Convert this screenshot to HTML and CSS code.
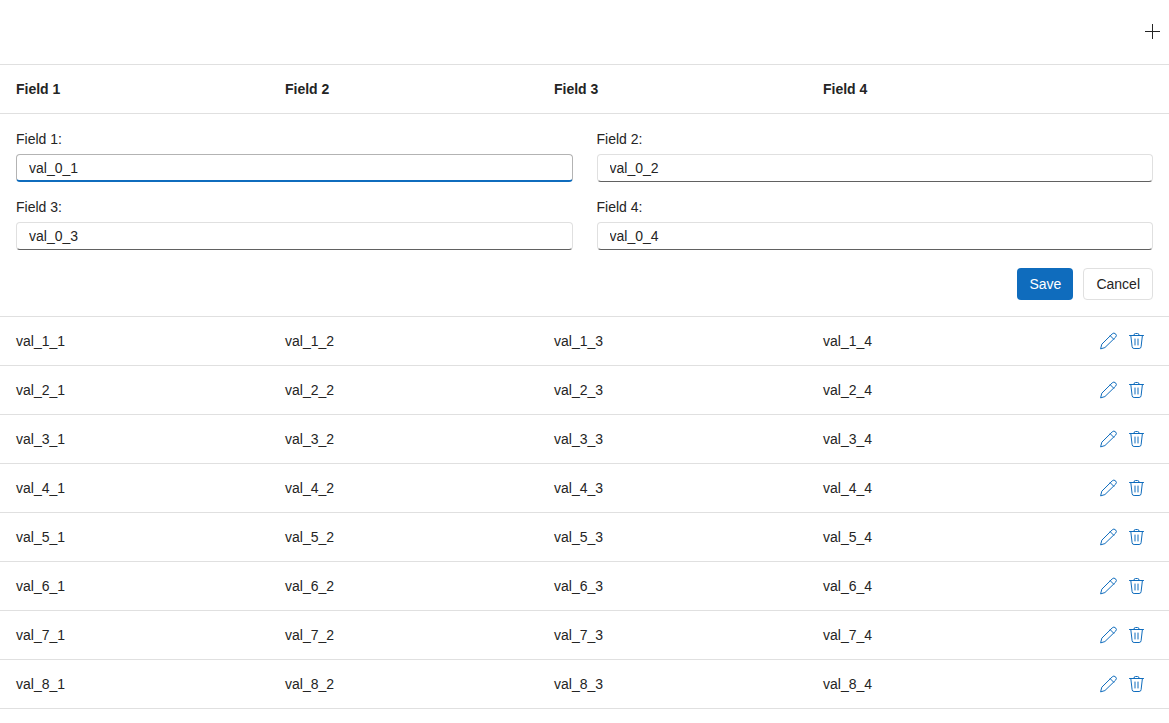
FILE: index.html
```html
<!DOCTYPE html>
<html lang="en">
<head>
<meta charset="utf-8">
<title>Editable grid</title>
<link rel="stylesheet" href="styles.css">
</head>
<body>
<svg class="sprite" aria-hidden="true">
  <symbol id="edit" viewBox="0 0 20 20"><path fill="none" stroke="currentColor" stroke-linejoin="round" stroke-linecap="round" d="M1.700 17.500 2.800 13.200 13.200 2.900A2.300 2.300 0 0 1 16.600 6.200L6.200 16.300ZM11.300 4.800l3.400 3.400"/></symbol>
  <symbol id="trash" viewBox="0 0 20 20"><path fill="none" stroke="currentColor" stroke-linecap="round" d="M2.500 4.500h14M7 4.500V4A1.500 1.500 0 0 1 8.500 2.500h2A1.500 1.500 0 0 1 12 4v.5M3.800 4.500l1.300 11.200A2 2 0 0 0 7.100 17.500h5A2 2 0 0 0 14.100 15.700L15.400 4.500M8 8v6M11 8v6"/></symbol>
</svg>
<header class="toolbar">
  <button class="icon-button add" type="button" aria-label="Add a row">
    <svg class="add-icon" viewBox="0 0 16 16"><path fill="none" stroke="currentColor" d="M7.500 0v15M0 7.500h15"/></svg>
  </button>
</header>
<table class="grid">
  <colgroup><col><col><col><col><col class="command-col"></colgroup>
  <thead>
    <tr><th scope="col">Field 1</th><th scope="col">Field 2</th><th scope="col">Field 3</th><th scope="col">Field 4</th><td></td></tr>
  </thead>
  <tbody id="rows">
    <tr>
      <td class="edit-cell" colspan="5">
        <form class="edit-form">
          <div class="fields">
            <div class="field"><label for="f1">Field 1:</label><input class="focused" id="f1" type="text" value="val_0_1"></div>
            <div class="field"><label for="f2">Field 2:</label><input id="f2" type="text" value="val_0_2"></div>
            <div class="field"><label for="f3">Field 3:</label><input id="f3" type="text" value="val_0_3"></div>
            <div class="field"><label for="f4">Field 4:</label><input id="f4" type="text" value="val_0_4"></div>
          </div>
          <div class="actions">
            <button class="button primary" type="button">Save</button>
            <button class="button" type="button">Cancel</button>
          </div>
        </form>
      </td>
    </tr>
  </tbody>
</table>
<script src="grid.js"></script>
</body>
</html>
```

FILE: styles.css
```css
* {
  box-sizing: border-box;
}

body {
  margin: 0;
  background: #fff;
  color: #242424;
  font: 14px/20px "Liberation Sans", Arial, sans-serif;
}

.sprite {
  display: none;
}

.toolbar {
  display: flex;
  align-items: center;
  justify-content: flex-end;
  height: 64px;
  padding-right: 8px;
}

.icon-button {
  display: flex;
  padding: 0;
  border: 0;
  background: none;
  color: #0f6cbd;
  cursor: pointer;
}

.icon-button svg {
  width: 20px;
  height: 20px;
}

.icon-button.add {
  color: #242424;
}

.icon-button .add-icon {
  width: 16px;
  height: 16px;
}

.grid {
  width: 100%;
  table-layout: fixed;
  border-collapse: separate;
  border-spacing: 0;
  border-top: 1px solid #e0e0e0;
}

.command-col {
  width: 93px;
}

.grid th,
.grid td {
  height: 49px;
  padding: 0 16px;
  border-bottom: 1px solid #e0e0e0;
  text-align: left;
  vertical-align: middle;
}

.grid .edit-cell {
  padding: 16px;
}

.grid .command-cell {
  padding: 0 22px 0 0;
}

.commands {
  display: flex;
  justify-content: flex-end;
  gap: 8px;
}

.fields {
  display: grid;
  grid-template-columns: 1fr 1fr;
  gap: 16px 24px;
}

.field {
  display: flex;
  flex-direction: column;
  gap: 6px;
}

.field label {
  line-height: 18px;
}

.field input {
  width: 100%;
  height: 28px;
  padding: 0 12px;
  border: 1px solid #e0e0e0;
  border-bottom-color: #616161;
  border-radius: 4px;
  outline: 0;
  background: #fff;
  color: inherit;
  font: inherit;
}

.field input.focused {
  padding-top: 1px;
  border-color: #b3b3b3;
  border-bottom: 2px solid #0f6cbd;
}

.actions {
  display: flex;
  justify-content: flex-end;
  gap: 10px;
  margin-top: 18px;
}

.button {
  height: 32px;
  padding: 0 12px;
  border: 1px solid #e0e0e0;
  border-radius: 4px;
  background: #fff;
  color: #242424;
  font: inherit;
  cursor: pointer;
}

.button.primary {
  border: 0;
  background: #0f6cbd;
  color: #fff;
}
```

FILE: grid.js
```js
const rows = document.getElementById("rows");
for (let r = 1; r <= 8; r++) {
  const cells = [1, 2, 3, 4].map((c) => `<td>val_${r}_${c}</td>`).join("");
  rows.insertAdjacentHTML("beforeend", `<tr>${cells}<td class="command-cell"><div class="commands">
    <button class="icon-button" type="button" aria-label="Edit row ${r}"><svg><use href="#edit"/></svg></button>
    <button class="icon-button" type="button" aria-label="Delete row ${r}"><svg><use href="#trash"/></svg></button>
  </div></td></tr>`);
}
```
